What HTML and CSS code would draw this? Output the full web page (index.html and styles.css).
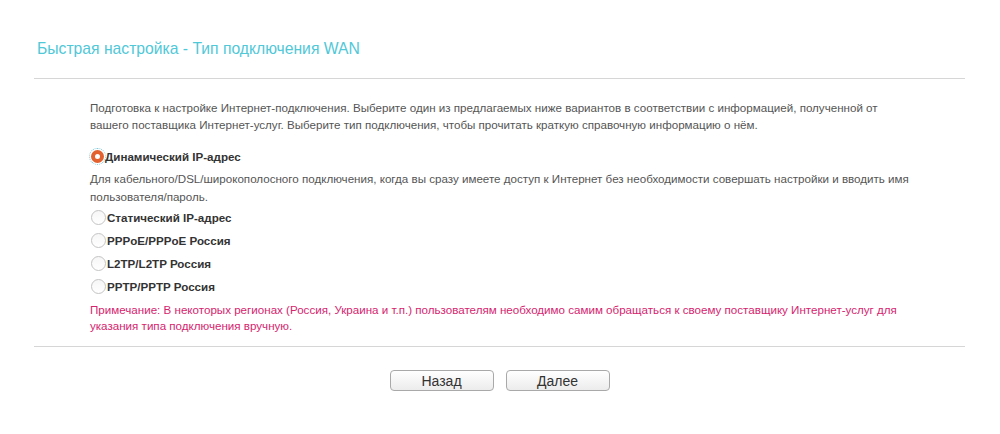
FILE: index.html
```html
<html lang="ru">
<head>
    <meta charset="UTF-8">
    <title>Быстрая настройка</title>
    <link rel="stylesheet" href="styles.css">
</head>
<body>
    <div class="page">
        <h2 class="title">Быстрая настройка - Тип подключения WAN</h2>
        <hr class="sep">

        <div class="content">
            <p class="intro">Подготовка к настройке Интернет-подключения. Выберите один из предлагаемых ниже вариантов в соответствии с информацией, полученной от вашего поставщика Интернет-услуг. Выберите тип подключения, чтобы прочитать краткую справочную информацию о нём.</p>

            <label class="opt first"><span class="radio checked focus"></span>Динамический IP-адрес</label>
            <p class="desc">Для кабельного/DSL/широкополосного подключения, когда вы сразу имеете доступ к Интернет без необходимости совершать настройки и вводить имя пользователя/пароль.</p>
            <label class="opt"><span class="radio"></span>Статический IP-адрес</label>
            <label class="opt"><span class="radio"></span>PPPoE/PPPoE Россия</label>
            <label class="opt"><span class="radio"></span>L2TP/L2TP Россия</label>
            <label class="opt"><span class="radio"></span>PPTP/PPTP Россия</label>

            <p class="note">Примечание: В некоторых регионах (Россия, Украина и т.п.) пользователям необходимо самим обращаться к своему поставщику Интернет-услуг для указания типа подключения вручную.</p>
        </div>

        <hr class="sep">

        <div class="buttons">
            <button class="btn">Назад</button>
            <button class="btn">Далее</button>
        </div>
    </div>
</body>
</html>
```

FILE: styles.css
```css
body {
    margin: 0;
    font-family: "Liberation Sans", Arial, sans-serif;
    color: #555;
    background: #fff;
}
.page {
    width: 931px;
    margin-left: 34px;
}
.title {
    margin: 0;
    padding: 40px 0 0 3px;
    height: 38px;
    font-size: 15.7px;
    font-weight: normal;
    color: #4fc8d8;
    line-height: 18px;
}
.sep {
    margin: 0;
    border: none;
    border-top: 1px solid #d6d6d6;
}
.content {
    padding: 20px 0 0 56px;
    height: 247px;
    font-size: 11.6px;
}
.intro {
    margin: 0;
    line-height: 17px;
    width: 825px;
}
.opt {
    display: flex;
    align-items: center;
    height: 23px;
    font-weight: bold;
    color: #333;
}
.opt.first {
    margin-top: 12px;
}
.radio {
    width: 15px;
    height: 15px;
    margin: 0 1px 0 1px;
    border: 1px solid #c4c4c4;
    border-radius: 50%;
    box-sizing: border-box;
    background: linear-gradient(#f6f6f6, #ffffff);
    flex: none;
}
.radio.checked {
    width: 13px;
    height: 13px;
    margin: 0 1px 0 1px;
    border: 4px solid #e2612f;
    background: #fff;
}
.radio.focus {
    outline: 1px dotted #7fc6d8;
    outline-offset: 1px;
}
.desc {
    margin: 2px 0 0;
    line-height: 18px;
    width: 825px;
}
.note {
    margin: 4px 0 0;
    line-height: 16px;
    color: #d6246f;
    width: 825px;
}
.buttons {
    display: flex;
    justify-content: center;
    gap: 12px;
    padding-top: 23px;
}
.btn {
    width: 104px;
    height: 21px;
    padding: 0;
    font-family: "Liberation Sans", Arial, sans-serif;
    font-size: 14px;
    color: #333;
    background: linear-gradient(#ffffff, #ececec);
    border: 1px solid #a9a9a9;
    border-radius: 4px;
}
```
